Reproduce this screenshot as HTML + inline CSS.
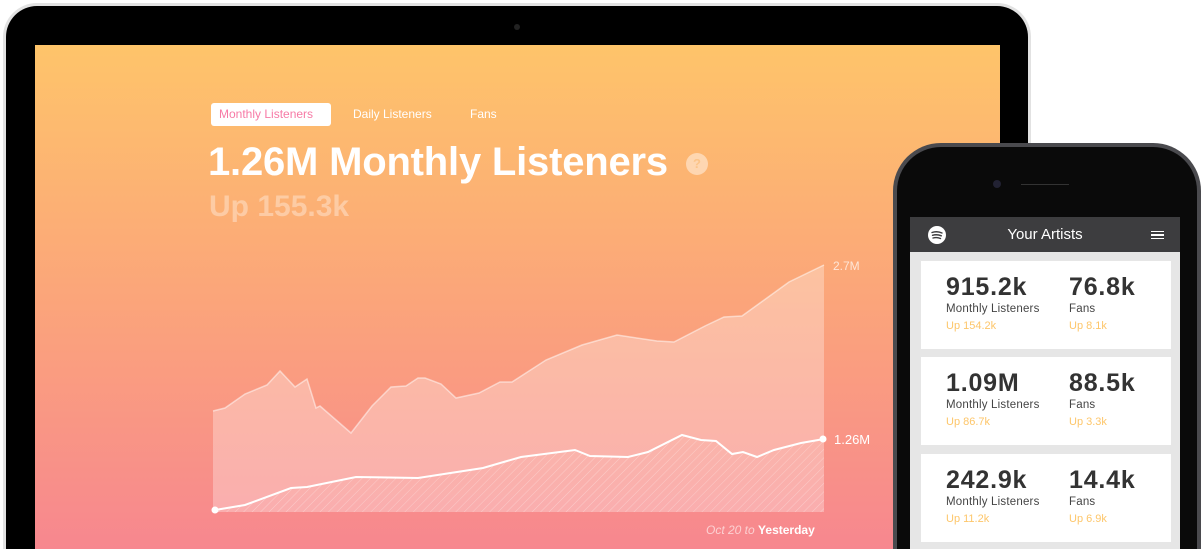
<!DOCTYPE html>
<html><head><style>
*{margin:0;padding:0;box-sizing:border-box}
html,body{width:1201px;height:549px;overflow:hidden}
body{background:#fff;position:relative;font-family:"Liberation Sans",sans-serif}
.lap{position:absolute;left:3px;top:3px;width:1028px;height:546px;border-radius:34px 34px 0 0;background:#000;border:3px solid #e2e2e2;border-bottom:0}
.scr{position:absolute;left:35px;top:45px;width:965px;height:504px;background:linear-gradient(#fec46a,#fba57a 50%,#f7878f)}
.cam{position:absolute;left:514px;top:24px;width:6px;height:6px;border-radius:50%;background:#222}
.t{position:absolute;font-size:12px;color:#fff}
.phone{position:absolute;left:893px;top:143px;width:308px;height:406px;border-radius:48px 48px 0 0;background:#0a0a0a;border:4px solid #4a4a4e;border-bottom:0}
.pscr{position:absolute;left:910px;top:217px;width:270px;height:332px;background:#e6e6e6}
.ph{height:35px;background:#3d3d3f;color:#fff;font-size:15px;text-align:center;line-height:35px;position:relative}
.card{position:absolute;left:11px;width:250px;height:88px;background:#fff}
.c{position:absolute;top:12px}
.big{font-size:25px;font-weight:bold;color:#333;line-height:28px;letter-spacing:0.8px}
.sm{font-size:11.5px;color:#444;line-height:16px;letter-spacing:0.2px}
.up{font-size:11px;color:#fdc66a;line-height:18px}
</style></head><body>
<div class="lap"></div>
<div class="cam"></div>
<div class="scr"></div>
<div style="position:absolute;left:211px;top:103px;width:120px;height:23px;background:#fff;border-radius:3px"></div>
<div class="t" style="left:219px;top:107px;color:#f77aa6">Monthly Listeners</div>
<div class="t" style="left:353px;top:107px">Daily Listeners</div>
<div class="t" style="left:470px;top:107px">Fans</div>
<div style="position:absolute;left:208px;top:140px;font-size:40px;font-weight:bold;color:#fff;letter-spacing:-0.2px">1.26M Monthly Listeners</div>
<div style="position:absolute;left:686px;top:153px;width:22px;height:22px;border-radius:50%;background:rgba(255,255,255,.45);color:#fcc48a;font-size:13px;font-weight:bold;text-align:center;line-height:22px">?</div>
<div style="position:absolute;left:209px;top:190px;font-size:30px;font-weight:bold;color:rgba(255,255,255,.35)">Up 155.3k</div>
<svg style="position:absolute;left:0;top:0" width="1201" height="549">
<defs><pattern id="h" width="6" height="6" patternUnits="userSpaceOnUse" patternTransform="rotate(45)"><line x1="0" y1="0" x2="0" y2="6" stroke="rgba(255,255,255,.35)" stroke-width="1"/></pattern></defs>
<path d="M213,411 L225,408 245,394 267,385 280,371 295,387 307,379 316,408 320,406 351,433 372,406 391,387 406,386 418,378 425,378 441,384 456,398 479,393 500,382 512,382 546,360 582,345 617,335 657,341 674,342 705,326 724,317 742,316 789,282 824,265 L824,512 L213,512Z" fill="rgba(255,255,255,.3)"/>
<polyline points="213,411 225,408 245,394 267,385 280,371 295,387 307,379 316,408 320,406 351,433 372,406 391,387 406,386 418,378 425,378 441,384 456,398 479,393 500,382 512,382 546,360 582,345 617,335 657,341 674,342 705,326 724,317 742,316 789,282 824,265" fill="none" stroke="rgba(255,255,255,.5)" stroke-width="1.5"/>
<path d="M215,510 L245,505 291,488 307,487 356,477 418,478 483,468 521,457 575,450 590,456 628,457 648,452 682,435 701,440 716,441 732,454 743,452 757,457 774,450 801,443 824,439 L824,512 L215,512Z" fill="url(#h)"/>
<polyline points="215,510 245,505 291,488 307,487 356,477 418,478 483,468 521,457 575,450 590,456 628,457 648,452 682,435 701,440 716,441 732,454 743,452 757,457 774,450 801,443 824,439" fill="none" stroke="#fff" stroke-width="2"/>
<circle cx="215" cy="510" r="3.5" fill="#fff"/><circle cx="823" cy="439" r="3.5" fill="#fff"/>
</svg>
<div class="t" style="left:833px;top:259px;color:rgba(255,255,255,.7)">2.7M</div>
<div class="t" style="left:834px;top:432px;font-size:13px">1.26M</div>
<div class="t" style="left:706px;top:523px;font-size:12px;color:rgba(255,255,255,.6)"><i>Oct 20 to</i> <b style="color:#fff">Yesterday</b></div>
<div class="phone"></div>
<div style="position:absolute;left:993px;top:180px;width:8px;height:8px;border-radius:50%;background:#223"></div>
<div style="position:absolute;left:1021px;top:184px;width:48px;height:1px;background:#333"></div>
<div class="pscr">
<div class="ph">Your Artists
<svg style="position:absolute;left:18px;top:9px" width="18" height="18" viewBox="0 0 18 18"><circle cx="9" cy="9" r="9" fill="#fff"/><path d="M4,6.5 Q9,4.8 14,7 M4.5,9.3 Q9,8 13.3,9.8 M5,12 Q9,11 12.5,12.5" stroke="#3d3d3f" stroke-width="1.4" fill="none" stroke-linecap="round"/></svg>
<div style="position:absolute;right:16px;top:14px;width:13px;height:8px;border-top:1.5px solid #fff;border-bottom:1.5px solid #fff"><div style="margin-top:2px;height:1.5px;background:#fff"></div></div>
</div>
<div class="card" style="top:44px"><div class="c" style="left:25px"><div class="big">915.2k</div><div class="sm">Monthly Listeners</div><div class="up">Up 154.2k</div></div><div class="c" style="left:148px"><div class="big">76.8k</div><div class="sm">Fans</div><div class="up">Up 8.1k</div></div></div>
<div class="card" style="top:140px"><div class="c" style="left:25px"><div class="big">1.09M</div><div class="sm">Monthly Listeners</div><div class="up">Up 86.7k</div></div><div class="c" style="left:148px"><div class="big">88.5k</div><div class="sm">Fans</div><div class="up">Up 3.3k</div></div></div>
<div class="card" style="top:237px"><div class="c" style="left:25px"><div class="big">242.9k</div><div class="sm">Monthly Listeners</div><div class="up">Up 11.2k</div></div><div class="c" style="left:148px"><div class="big">14.4k</div><div class="sm">Fans</div><div class="up">Up 6.9k</div></div></div>
</div>
</body></html>
